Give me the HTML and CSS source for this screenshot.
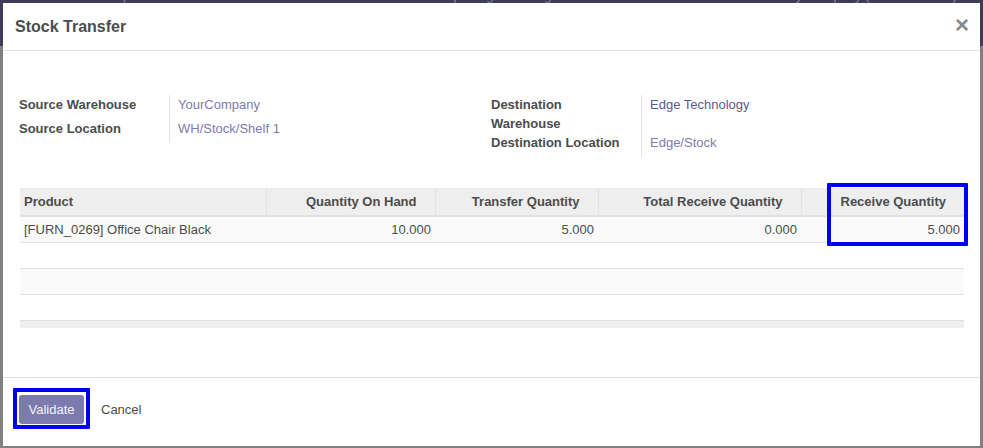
FILE: index.html
```html
<!DOCTYPE html>
<html>
<head>
<meta charset="utf-8">
<link rel="stylesheet" href="styles.css">
</head>
<body>
<div class="navbar">
  <span class="nav-item n1">Overview</span>
  <span class="nav-item n2">Operations</span>
  <span class="nav-item n3">Internal Stock Transfer</span>
  <span class="nav-item n4">Master Data</span>
  <span class="nav-item n5">Reporting</span>
  <span class="nav-item n6">Configuration</span>
  <span class="nav-item n7">My Company (San Francisco) ▾</span>
</div>

<div class="modal">
  <div class="modal-header">
    <h4 class="modal-title">Stock Transfer</h4>
    <span class="close">×</span>
  </div>
  <div class="modal-body">
    <div class="form-grid">
      <div class="group">
        <div class="row"><div class="label">Source Warehouse</div><div class="value">YourCompany</div></div>
        <div class="row"><div class="label">Source Location</div><div class="value">WH/Stock/Shelf 1</div></div>
      </div>
      <div class="group">
        <div class="row"><div class="label">Destination<br>Warehouse</div><div class="value dark">Edge Technology</div></div>
        <div class="row"><div class="label">Destination Location</div><div class="value">Edge/Stock</div></div>
      </div>
    </div>

    <table class="list">
      <colgroup>
        <col style="width:246px"><col style="width:169px"><col style="width:163px"><col style="width:203px"><col style="width:163px">
      </colgroup>
      <thead>
        <tr>
          <th>Product</th>
          <th class="num">Quantity On Hand</th>
          <th class="num">Transfer Quantity</th>
          <th class="num">Total Receive Quantity</th>
          <th class="num">Receive Quantity</th>
        </tr>
      </thead>
      <tbody>
        <tr class="odd">
          <td>[FURN_0269] Office Chair Black</td>
          <td class="num">10.000</td>
          <td class="num">5.000</td>
          <td class="num">0.000</td>
          <td class="num">5.000</td>
        </tr>
        <tr><td colspan="5"></td></tr>
        <tr class="odd"><td colspan="5"></td></tr>
        <tr><td colspan="5"></td></tr>
      </tbody>
      <tfoot><tr><td colspan="5"></td></tr></tfoot>
    </table>
  </div>
  <div class="modal-footer">
    <button class="btn-primary">Validate</button>
    <span class="btn-link">Cancel</span>
  </div>
  <div class="hl hl-col"></div>
  <div class="hl hl-btn"></div>
</div>
</body>
</html>
```
FILE: styles.css
```css
html, body {
  margin: 0;
  padding: 0;
}
body {
  width: 983px;
  height: 448px;
  overflow: hidden;
  background: #808080;
  font-family: "Liberation Sans", Arial, sans-serif;
  font-size: 13px;
  color: #4c4c4c;
  position: relative;
}
.navbar {
  height: 46px;
  background: #3e3d56;
  position: relative;
  color: #85849c;
  font-size: 13px;
  overflow: hidden;
}
.nav-item {
  position: absolute;
  top: -12px;
  white-space: nowrap;
}
.n1 { left: 38px; }
.n2 { left: 113px; }
.n3 { left: 196px; }
.n4 { left: 347px; }
.n5 { left: 437px; }
.n6 { left: 514px; }
.n7 { left: 785px; }

.modal {
  position: absolute;
  left: 3px;
  top: 3px;
  width: 977px;
  height: 443px;
  background: #fff;
  display: flex;
  flex-direction: column;
}
.modal-header {
  height: 47px;
  display: flex;
  align-items: center;
  justify-content: space-between;
  padding: 0 12px;
  border-bottom: 1px solid #dee2e6;
}
.modal-title {
  margin: 0;
  font-size: 16px;
  font-weight: 700;
  color: #4c4c4c;
}
.close {
  font-size: 24px;
  font-weight: 700;
  color: #8a8a8a;
  line-height: 1;
  margin-top: -4px;
  margin-right: -1px;
}
.modal-body {
  flex: 1;
  padding: 44px 16px 0 16px;
}
.form-grid {
  display: grid;
  grid-template-columns: 472px 1fr;
}
.group {
  display: flex;
  flex-direction: column;
}
.row {
  display: flex;
  min-height: 24px;
}
.label {
  width: 151px;
  flex: none;
  font-weight: 700;
  line-height: 19px;
  border-right: 1px solid #dee2e6;
  box-sizing: border-box;
  padding-right: 8px;
}
.value {
  padding-left: 8px;
  line-height: 19px;
  color: #7c7bad;
}
.value.dark {
  color: #5a5990;
}

.list {
  margin-top: 31px;
  width: 944px;
  border-collapse: collapse;
  table-layout: fixed;
  margin-left: 1px;
}
.list th {
  background: #eeeeee;
  height: 24px;
  padding: 0 4px 2px 4px;
  text-align: left;
  font-weight: 700;
  border-left: 1px solid #dee2e6;
  border-top: 1px solid #e9e9e9;
  border-bottom: 2px solid #dee2e6;
  white-space: nowrap;
}
.list th:first-child { border-left: none; }
.list th.num {
  text-align: right;
  padding-right: 18px;
}
.list td {
  height: 25px;
  padding: 0 4px;
  border-bottom: 1px solid #dee2e6;
}
.list td.num {
  text-align: right;
  padding-right: 4px;
}
.list tbody tr.odd td {
  background: #fafafa;
}
.list tfoot td {
  height: 7px;
  padding: 0;
  background: #eeeeee;
  border-bottom: none;
}

.modal-footer {
  height: 69px;
  border-top: 1px solid #dee2e6;
  display: flex;
  align-items: flex-start;
  padding: 17px 16px 0 16px;
  box-sizing: border-box;
  gap: 17px;
}
.btn-primary {
  width: 65px;
  height: 29px;
  background: #7c7bad;
  color: #f3f3f7;
  border: none;
  border-radius: 3px;
  font-family: "Liberation Sans", Arial, sans-serif;
  font-size: 13px;
  padding: 0;
}
.btn-link {
  color: #4c4c4c;
  line-height: 29px;
}

.hl {
  position: absolute;
  border: 4px solid #0000f0;
  box-sizing: border-box;
  border-radius: 1px;
}
.hl-col {
  left: 824px;
  top: 180px;
  width: 141px;
  height: 63px;
}
.hl-btn {
  left: 10px;
  top: 385px;
  width: 77px;
  height: 41px;
}
```
